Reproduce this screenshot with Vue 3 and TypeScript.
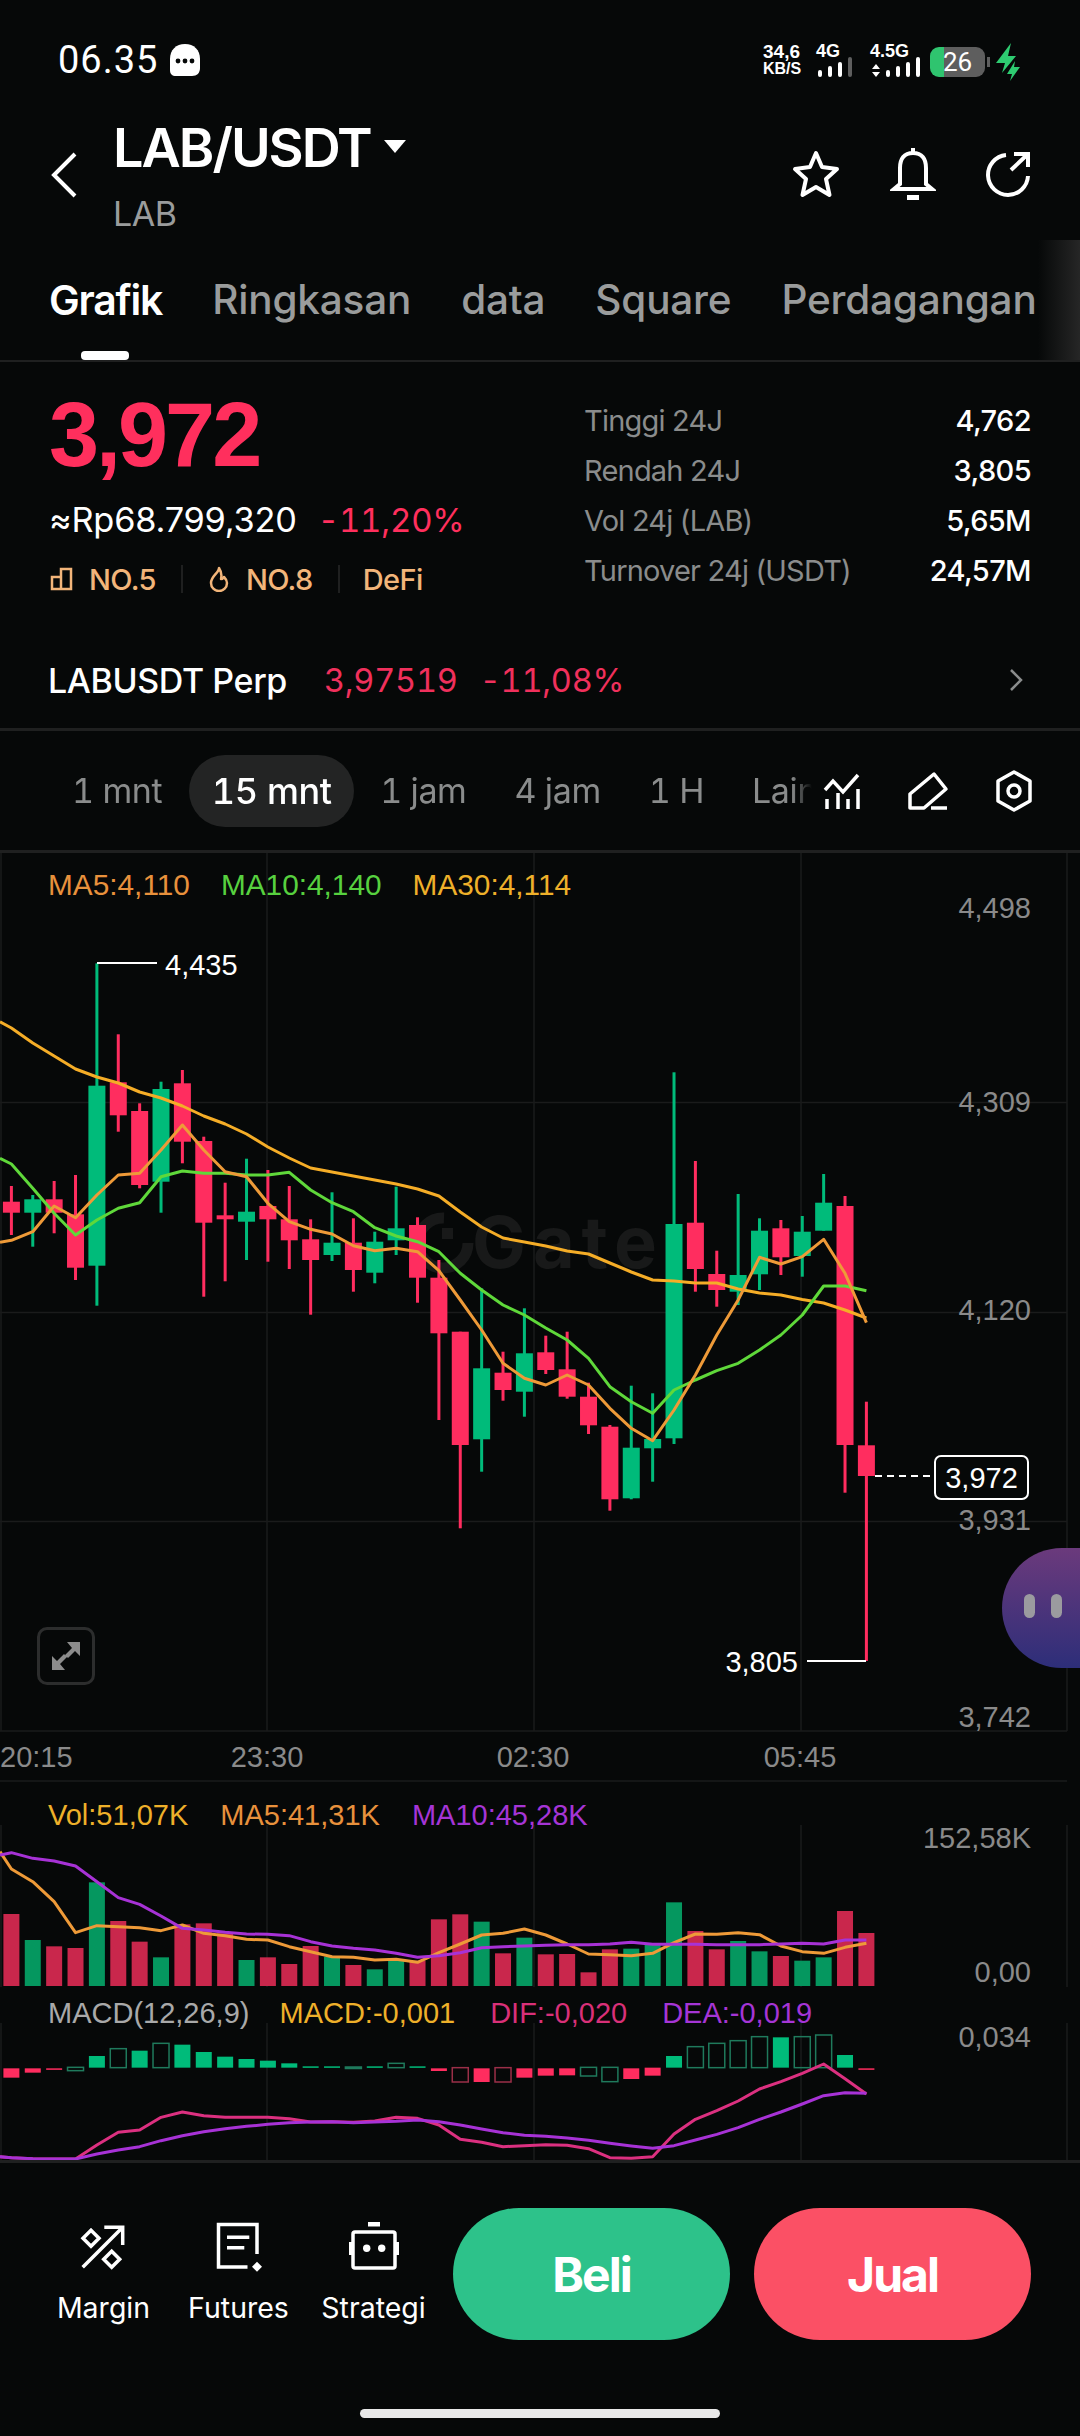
<template>
  <div class="app">
    <!-- status bar -->
    <div class="status">
      <span class="clock">06.35</span>
      <svg class="bubble" width="30" height="32" viewBox="0 0 30 32">
        <path d="M15 0C24 0 30 6 30 15v9c0 5-3 8-8 8H6C2 32 0 30 0 26V15C0 6 6 0 15 0Z" fill="#fff" />
        <circle cx="8" cy="17" r="2.4" fill="#060808" />
        <circle cx="15" cy="17" r="2.4" fill="#060808" />
        <circle cx="22" cy="17" r="2.4" fill="#060808" />
      </svg>
      <div class="status-right">
        <div class="speed"><span class="speed-num">34,6</span><span>KB/S</span></div>
        <div class="net net-a">
          <span class="net-label">4G</span>
          <div class="bars">
            <i v-for="(h, i) in signalA" :key="i" :class="{ off: i === 3 }" :style="{ height: h + 'px' }"></i>
          </div>
        </div>
        <div class="net net-b">
          <span class="net-label">4.5G</span>
          <div class="bars">
            <svg class="updown" width="8" height="13" viewBox="0 0 8 13">
              <path d="M4 0l4 5H0ZM4 13l4-5H0Z" fill="#fff" />
            </svg>
            <i v-for="(h, i) in signalB" :key="i" :style="{ height: h + 'px' }"></i>
          </div>
        </div>
        <div class="battery"><span>26</span></div>
        <i class="battery-nub"></i>
        <svg class="bolt" width="24" height="38" viewBox="0 0 24 38">
          <path d="M15 0 0 20h9L6 30 20 13h-8l3-13ZM19 18 11 31h5l-2 7 10-14h-6l1-6Z" fill="#2ecc71" />
        </svg>
      </div>
    </div>

    <!-- title bar -->
    <div class="head">
      <svg class="back" width="26" height="46" viewBox="0 0 26 46">
        <path d="M24 2 3 23l21 21" fill="none" stroke="#fff" stroke-width="4" />
      </svg>
      <div class="head-title">
        <div class="pair">LAB/USDT<i class="caret"></i></div>
        <div class="base">LAB</div>
      </div>
      <div class="head-icons">
        <svg width="50" height="50" viewBox="0 0 50 50">
          <path d="M25 4l6 14 15 2-11 10 3.500 16L25 38l-13.500 8L15 30 4 20l15-2Z" fill="none" stroke="#fff" stroke-width="4" stroke-linejoin="round" />
        </svg>
        <svg width="46" height="52" viewBox="0 0 46 52">
          <path d="M23 5C14 5 10 11 10 20v16l-6 5h38l-6-5V20C36 11 32 5 23 5ZM23 0v5" fill="none" stroke="#fff" stroke-width="4" />
          <rect x="17" y="47" width="12" height="5" fill="#fff" />
        </svg>
        <svg width="46" height="46" viewBox="0 0 46 46">
          <path d="M21 4a20 20 0 1 0 22 21" fill="none" stroke="#fff" stroke-width="4" />
          <path d="M26 19 43 3M29 3h14v13" fill="none" stroke="#fff" stroke-width="4" />
        </svg>
      </div>
    </div>

    <!-- tabs -->
    <div class="tabs">
      <div v-for="t in tabs" :key="t" class="tab" :class="{ active: t === 'Grafik' }">{{ t }}</div>
      <div class="tabs-fade"></div>
    </div>

    <!-- price summary -->
    <div class="summary">
      <div class="summary-left">
        <div class="last">3,972</div>
        <div class="fiat"><span>≈Rp68.799,320</span><span class="neg">-11,20%</span></div>
        <div class="tags">
          <svg width="23" height="24" viewBox="0 0 23 24">
            <path d="M2 10h9v12H2ZM11 2h10v20H11Z" fill="none" stroke="#f2b57a" stroke-width="2.500" />
          </svg>
          <span class="tag-a">NO.5</span>
          <i class="tag-sep"></i>
          <svg width="22" height="26" viewBox="0 0 22 26">
            <path d="M11 2c0 5-8 8-8 15a8 8 0 0 0 16 0c0-3-2-5-3-6-1 2-2 2-3 2 1-4 0-8-2-11Z" fill="none" stroke="#f2b57a" stroke-width="2.500" stroke-linejoin="round" />
          </svg>
          <span class="tag-a">NO.8</span>
          <i class="tag-sep"></i>
          <span class="tag-b">DeFi</span>
        </div>
      </div>
      <div class="summary-right">
        <div v-for="r in stats" :key="r.label" class="stat">
          <span>{{ r.label }}</span><b>{{ r.value }}</b>
        </div>
      </div>
    </div>

    <!-- perp link -->
    <div class="perp">
      <span class="perp-name">LABUSDT Perp</span>
      <span class="perp-num">3,97519</span>
      <span class="perp-num perp-chg">-11,08%</span>
      <svg class="perp-go" width="14" height="24" viewBox="0 0 14 24">
        <path d="M2 2l10 10L2 22" fill="none" stroke="#8a8c8c" stroke-width="2.500" />
      </svg>
    </div>

    <!-- timeframes -->
    <div class="frames">
      <div class="frame-list">
        <div v-for="f in frames" :key="f" class="frame" :class="{ on: f === '15 mnt' }">{{ f }}</div>
      </div>
      <div class="frame-tools">
        <svg width="38" height="38" viewBox="0 0 38 38">
          <path d="M2 18 10 9l10 11L35 3" fill="none" stroke="#fff" stroke-width="3.500" />
          <path d="M4 27v10M15 21v16M25 27v10M35 17v20" fill="none" stroke="#fff" stroke-width="3.500" />
        </svg>
        <svg width="42" height="40" viewBox="0 0 42 40">
          <path d="M27 3 39 18 17 37H3V23Z" fill="none" stroke="#fff" stroke-width="3.500" stroke-linejoin="round" />
          <path d="M24 37h16" fill="none" stroke="#fff" stroke-width="3.500" />
        </svg>
        <svg width="38" height="42" viewBox="0 0 38 42">
          <path d="M19 2 35 11v20L19 40 3 31V11Z" fill="none" stroke="#fff" stroke-width="3.500" stroke-linejoin="round" />
          <circle cx="19" cy="21" r="6" fill="none" stroke="#fff" stroke-width="3.500" />
        </svg>
      </div>
    </div>

    <!-- chart, drawn in page coordinates -->
    <div class="chart">
      <svg class="plot" width="1080" height="1313" viewBox="0 851 1080 1313">
        <g class="grid">
          <line v-for="y in gridH" :key="y" x1="0" x2="1067" :y1="y" :y2="y" />
          <template v-for="x in gridV" :key="x">
            <line :x1="x" :x2="x" y1="851" y2="1731" />
            <line :x1="x" :x2="x" y1="1825" y2="1987" />
            <line :x1="x" :x2="x" y1="2023" y2="2160" />
          </template>
        </g>

        <!-- watermark -->
        <g class="mark">
          <path d="M444 1218a25 25 0 1 0 24 25" fill="none" stroke="#181919" stroke-width="11" />
          <rect x="442" y="1228" width="11" height="11" fill="#181919" />
          <text x="472" y="1268" textLength="185">Gate</text>
        </g>

        <g v-for="(c, i) in candles" :key="i" :fill="c[0] === 'r' ? red : green">
          <rect :x="cx(i) - 1.500" :y="c[1]" width="3" :height="c[4] - c[1]" />
          <rect :x="cx(i) - 8.500" :y="c[2]" width="17" :height="c[3] - c[2]" />
        </g>
        <polyline class="ln" stroke="#f5ad27" :points="path(ma30, 1021.7)" />
        <polyline class="ln" stroke="#5fd83a" :points="path(ma10, 1158.3)" />
        <polyline class="ln" stroke="#ee9a38" :points="path(ma5, 1242.3)" />

        <path d="M97 963h60" class="tick" />
        <text class="tag" x="165" y="975">4,435</text>
        <path d="M807 1661h59" class="tick" />
        <text class="tag" x="798" y="1672" text-anchor="end">3,805</text>
        <path d="M875 1476h55" class="tick" stroke-dasharray="7 5" />
        <rect x="935" y="1456" width="93" height="43" rx="6" fill="#060808" stroke="#fff" stroke-width="2" />
        <text class="tag" x="981.500" y="1488" text-anchor="middle">3,972</text>

        <g class="axis">
          <text v-for="a in axis" :key="a.t" x="1031" :y="a.y" text-anchor="end">{{ a.t }}</text>
          <text v-for="a in times" :key="a.t" :x="a.x" y="1767" :text-anchor="a.x ? 'middle' : 'start'">{{ a.t }}</text>
        </g>

        <!-- volume -->
        <rect
          v-for="(v, i) in volume"
          :key="'v' + i"
          :x="cx(i) - 8"
          :y="volY(v)"
          width="16"
          :height="volY(588) - volY(v)"
          :fill="volUp.includes(i) ? '#05975f' : '#c9274c'"
        />
        <polyline class="ln" stroke="#ee9a38" :points="subPath(volMa5, 185)" />
        <polyline class="ln" stroke="#a732d6" :points="subPath(volMa10, 195)" />

        <!-- macd -->
        <rect
          v-for="(m, i) in macd"
          :key="'m' + i"
          :x="cx(i) - 8"
          :y="volY(m[0])"
          width="16"
          :height="Math.max((m[1] - m[0]) / 3, 1.500)"
          :fill="m[2] ? 'none' : m[0] < 833 ? green : red"
          :stroke="m[2] ? (m[0] < 833 ? '#1f7a5c' : '#9b2f48') : 'none'"
          stroke-width="1.500"
        />
        <polyline class="ln" stroke="#dc3080" :points="subPath(dif, 1100)" />
        <polyline class="ln" stroke="#a732d6" :points="subPath(dea, 1100)" />
      </svg>

      <div class="legend legend-ma">
        <span class="c-orange">MA5:4,110</span>
        <span class="c-green">MA10:4,140</span>
        <span class="c-yellow">MA30:4,114</span>
      </div>
      <div class="legend legend-vol">
        <span class="c-yellow">Vol:51,07K</span>
        <span class="c-orange">MA5:41,31K</span>
        <span class="c-purple">MA10:45,28K</span>
      </div>
      <div class="legend legend-macd">
        <span class="c-gray">MACD(12,26,9)</span>
        <span class="c-yellow">MACD:-0,001</span>
        <span class="c-pink">DIF:-0,020</span>
        <span class="c-purple">DEA:-0,019</span>
      </div>

      <div class="expand">
        <svg width="30" height="30" viewBox="0 0 30 30">
          <path d="M29 1v14l-5-5-7 7-3-3 7-7-5-6ZM1 29V15l5 5 7-7 3 3-7 7 5 6Z" fill="#8c8c8c" />
        </svg>
      </div>
      <div class="assistant"><i></i><i></i></div>
    </div>

    <!-- actions -->
    <div class="actions">
      <div class="tool">
        <svg width="50" height="50" viewBox="0 0 50 50">
          <path d="M12 8.300l8 8-8 8-8-8ZM32.700 29.300l8 8-8 8-8-8ZM3.700 45.300 43.700 5.300M25.300 5.300h18.400V23" fill="none" stroke="#fff" stroke-width="3.500" />
        </svg>
        <span>Margin</span>
      </div>
      <div class="tool">
        <svg width="50" height="50" viewBox="0 0 50 50">
          <path d="M43 32V2.500H4.500V45h29M13 15.300h22.300M13 25.700h17.300" fill="none" stroke="#fff" stroke-width="3.500" />
          <path d="M43 39.700l5 5-5 5-5-5Z" fill="#fff" />
        </svg>
        <span>Futures</span>
      </div>
      <div class="tool">
        <svg width="52" height="50" viewBox="0 0 52 50">
          <path d="M20 0h12v4.500H20ZM1 20h3.500v13H1ZM47.500 20H51v13h-3.500Z" fill="#fff" />
          <rect x="5" y="10" width="42" height="36" rx="2" fill="none" stroke="#fff" stroke-width="3.500" />
          <circle cx="18.700" cy="26.300" r="3.700" fill="#fff" />
          <circle cx="33.700" cy="26.300" r="3.700" fill="#fff" />
        </svg>
        <span>Strategi</span>
      </div>
      <div class="trade buy">Beli</div>
      <div class="trade sell">Jual</div>
    </div>
    <div class="home-bar"></div>
  </div>
</template>

<script setup lang="ts">
type Candle = [string, number, number, number, number];

const red = '#ff2d5f';
const green = '#00bb7a';

const signalA = [7, 11, 15, 20];
const signalB = [7, 11, 15, 20];

const tabs = ['Grafik', 'Ringkasan', 'data', 'Square', 'Perdagangan'];
const frames = ['1 mnt', '15 mnt', '1 jam', '4 jam', '1 H', 'Lain'];

const stats = [
  { label: 'Tinggi 24J', value: '4,762' },
  { label: 'Rendah 24J', value: '3,805' },
  { label: 'Vol 24j (LAB)', value: '5,65M' },
  { label: 'Turnover 24j (USDT)', value: '24,57M' },
];

const gridH = [1102.5, 1312.5, 1521.5, 1731, 1781];
const gridV = [1, 267, 534, 801, 1067];

const axis = [
  { t: '4,498', y: 918 },
  { t: '4,309', y: 1112 },
  { t: '4,120', y: 1320 },
  { t: '3,931', y: 1530 },
  { t: '3,742', y: 1727 },
  { t: '152,58K', y: 1848 },
  { t: '0,00', y: 1982 },
  { t: '0,034', y: 2047 },
  { t: '-0,037', y: 2180 },
];
const times = [
  { t: '20:15', x: 0 },
  { t: '23:30', x: 267 },
  { t: '02:30', x: 533 },
  { t: '05:45', x: 800 },
];

// color, wick top, body top, body bottom, wick bottom
const candles: Candle[] = [
  ['r', 1186, 1201.7, 1212.7, 1235],
  ['g', 1195, 1199.3, 1212.7, 1246.7],
  ['r', 1181, 1199.3, 1212.7, 1233.3],
  ['r', 1175, 1214.3, 1267.7, 1280],
  ['g', 963.3, 1085.7, 1265.7, 1305.7],
  ['r', 1034.3, 1082.3, 1115.3, 1131.7],
  ['r', 1103.3, 1111, 1185, 1188.3],
  ['g', 1081.7, 1089, 1181.7, 1212.7],
  ['r', 1070, 1083.3, 1141.7, 1163.3],
  ['r', 1136.7, 1141, 1222.7, 1296.7],
  ['r', 1182.7, 1215.3, 1219.3, 1281.3],
  ['g', 1158.7, 1211.7, 1221.7, 1260],
  ['r', 1170, 1206, 1219.3, 1261.7],
  ['r', 1186, 1219.3, 1240.3, 1269],
  ['r', 1219.3, 1239.3, 1260, 1314.7],
  ['g', 1192.3, 1242.7, 1255, 1261],
  ['r', 1218.3, 1242.7, 1270, 1291.7],
  ['g', 1231.7, 1241.7, 1272.7, 1283.3],
  ['g', 1186.7, 1228.3, 1240.3, 1255],
  ['r', 1217.3, 1225, 1277.7, 1302.7],
  ['r', 1260, 1277.7, 1333.3, 1420],
  ['r', 1331.7, 1331.7, 1445, 1528.3],
  ['g', 1288.3, 1368.3, 1439.3, 1471.7],
  ['r', 1351.7, 1372.7, 1390, 1400.7],
  ['g', 1308.3, 1353.3, 1391.7, 1416.7],
  ['r', 1335.7, 1352.3, 1370, 1374],
  ['r', 1331.7, 1369.3, 1396.7, 1398.7],
  ['r', 1382.7, 1396.7, 1425.3, 1434],
  ['r', 1425, 1426.7, 1499.3, 1510.7],
  ['g', 1385.7, 1447.7, 1498.3, 1499.3],
  ['g', 1393.3, 1439, 1448.3, 1481.7],
  ['g', 1072.3, 1224, 1438.3, 1444],
  ['r', 1161, 1222.7, 1269, 1291.7],
  ['r', 1250.7, 1274, 1290, 1306.7],
  ['g', 1194, 1275, 1291.7, 1305],
  ['g', 1218.3, 1230.7, 1274.3, 1290],
  ['r', 1220, 1228.3, 1257.3, 1275],
  ['g', 1216, 1231.7, 1256, 1276.7],
  ['g', 1174, 1202.7, 1230.7, 1230.7],
  ['r', 1196, 1206, 1445, 1492.7],
  ['r', 1401.7, 1445.3, 1476, 1661],
];

const ma5 = [1240.3, 1231.7, 1206, 1217.7, 1195, 1175, 1173.3, 1150, 1125, 1150, 1171.7, 1176.7, 1203.3, 1221.7, 1229.3, 1234, 1245.7, 1250.7, 1248.3, 1251.7, 1270.7, 1300, 1330, 1363.3, 1378.3, 1385, 1375, 1385, 1408.3, 1428.3, 1440.7, 1410, 1375, 1335, 1300, 1257.3, 1264, 1256.7, 1239.3, 1273.3, 1322.7];
const ma10 = [1164, 1188.3, 1213.3, 1235, 1220, 1208.3, 1202.7, 1176.7, 1171, 1173.3, 1173.3, 1175, 1175, 1172.3, 1190, 1202.7, 1211.7, 1227.7, 1236, 1241.7, 1251.7, 1273.3, 1290, 1305, 1315, 1328, 1340, 1358.3, 1386.7, 1401.7, 1413.3, 1390, 1380, 1370.7, 1363.3, 1350, 1335, 1315, 1286, 1286, 1290.7];
const ma30 = [1028, 1043, 1056, 1069, 1077, 1083, 1092, 1098, 1106, 1116, 1124, 1134, 1147, 1158, 1168, 1172, 1176, 1180, 1184, 1189, 1196, 1212, 1227, 1238, 1242, 1246, 1251, 1254, 1263, 1272, 1280, 1281, 1283, 1283, 1289, 1293, 1295, 1299.5, 1303, 1310, 1318];

// lower panels sampled at 3x from y = 1790
const volume = [372, 450, 469, 474, 277, 393, 455, 502, 403, 400, 430, 510, 502, 522, 468, 500, 525, 538, 510, 512, 388, 373, 395, 490, 443, 493, 492, 547, 478, 476, 460, 337, 423, 478, 453, 484, 498, 512, 502, 363, 429];
const volUp = [1, 4, 7, 11, 15, 17, 18, 22, 24, 29, 30, 31, 34, 35, 37, 38];
const volMa5 = [237, 275, 335, 428, 407, 410, 413, 422, 405, 430, 437, 448, 450, 470, 485, 500, 502, 510, 508, 517, 488, 462, 435, 430, 417, 435, 462, 492, 494, 497, 490, 458, 432, 433, 428, 434, 468, 485, 490, 472, 460];
const volMa10 = [188, 205, 213, 228, 275, 323, 343, 378, 415, 420, 427, 432, 433, 437, 455, 468, 475, 480, 490, 502, 497, 488, 473, 470, 468, 466, 464, 464, 462, 457, 463, 463, 463, 464, 464, 464, 462, 460, 462, 450, 450];
const dif = [1103, 1106, 1107, 1107, 1065, 1027, 1020, 982, 966, 977, 982, 982, 982, 986, 996, 995, 997, 993, 982, 985, 1005, 1048, 1057, 1070, 1067, 1064, 1066, 1076, 1103, 1105, 1100, 1032, 988, 962, 933, 897, 875, 850, 822, 866, 912];
const dea = [1103, 1106, 1107, 1107, 1092, 1080, 1070, 1052, 1037, 1025, 1016, 1009, 1003, 998, 996, 995, 998, 996, 994, 990, 995, 1005, 1017, 1028, 1036, 1039, 1044, 1051, 1060, 1068, 1075, 1067, 1050, 1033, 1013, 988, 966, 942, 917, 908, 910];

// top, bottom, hollow
const macd: [number, number, boolean][] = [
  [835, 863, false], [835, 848, false], [835, 836, false], [832, 842, true],
  [798, 833, false], [776, 833, true], [782, 833, false], [760, 833, true],
  [764, 833, false], [786, 833, false], [800, 833, false], [807, 833, false],
  [812, 833, false], [820, 833, false], [829, 832, false], [829, 832, false],
  [831, 832, true], [829, 832, false], [820, 833, true], [829, 832, false],
  [835, 843, false], [833, 876, true], [835, 876, false], [833, 876, true],
  [835, 863, false], [835, 857, false], [835, 856, false], [832, 858, true],
  [832, 875, true], [835, 867, false], [833, 857, false], [798, 833, false],
  [770, 833, true], [760, 833, true], [752, 833, true], [740, 833, true],
  [742, 833, false], [740, 833, true], [735, 833, true], [795, 833, false],
  [835, 836, false],
];

const cx = (i: number) => 11.4 + i * 21.375;
const volY = (z: number) => 1790 + z / 3;

const path = (ys: number[], lead: number) =>
  `0,${lead} ` + ys.map((y, i) => `${cx(i)},${y}`).join(' ');
const subPath = (zs: number[], lead: number) =>
  `0,${volY(lead)} ` + zs.map((z, i) => `${cx(i)},${volY(z)}`).join(' ');
</script>

<style>
html,
body {
  margin: 0;
  background: #060808;
}
</style>

<style scoped>
.app {
  width: 1080px;
  height: 2436px;
  overflow: hidden;
  background: #060808;
  color: #fff;
  font-family: Inter, 'Liberation Sans', sans-serif;
  display: flex;
  flex-direction: column;
}

/* status bar */
.status {
  height: 120px;
  flex: none;
  display: flex;
  align-items: center;
  padding: 0 60px 0 58px;
}
.clock {
  font-family: Roboto, sans-serif;
  font-size: 38px;
  letter-spacing: 1px;
}
.bubble {
  margin-left: 12px;
}
.status-right {
  margin-left: auto;
  display: flex;
  align-items: flex-end;
  height: 34px;
}
.speed {
  display: flex;
  flex-direction: column;
  font-family: 'Liberation Sans', sans-serif;
  font-weight: 700;
  font-size: 16px;
  line-height: 17px;
  width: 53px;
}
.speed-num {
  font-size: 19px;
}
.net {
  position: relative;
  height: 34px;
}
.net-a {
  width: 54px;
}
.net-b {
  width: 60px;
}
.net-label {
  position: absolute;
  left: 0;
  top: -1px;
  font-family: 'Liberation Sans', sans-serif;
  font-weight: 700;
  font-size: 18px;
  line-height: 19px;
}
.bars {
  position: absolute;
  bottom: 0;
  left: 2px;
  display: flex;
  align-items: flex-end;
  gap: 6px;
}
.bars i {
  width: 4px;
  border-radius: 2px;
  background: #fff;
}
.bars i.off {
  background: #5e5e5e;
}
.battery {
  width: 55px;
  height: 30px;
  border-radius: 9px;
  background: linear-gradient(90deg, #2fc46f 14px, #5e5e5e 14px);
  display: flex;
  align-items: center;
  padding-left: 13px;
  box-sizing: border-box;
  font-size: 26px;
  font-family: Roboto, sans-serif;
}
.battery-nub {
  width: 3px;
  height: 10px;
  margin: 0 0 10px 2px;
  background: #5e5e5e;
}
.bolt {
  margin: 0 0 -4px 6px;
}

/* title bar */
.head {
  height: 120px;
  flex: none;
  display: flex;
  padding: 0 49px 0 51px;
}
.back {
  margin: 32px 36px 0 0;
}
.pair {
  font-size: 54px;
  line-height: 56px;
  font-weight: 600;
  letter-spacing: -2px;
  display: flex;
  align-items: center;
}
.caret {
  width: 0;
  height: 0;
  margin: 0 0 4px 13px;
  border-left: 11px solid transparent;
  border-right: 11px solid transparent;
  border-top: 13px solid #fff;
}
.base {
  margin-top: 18px;
  font-size: 34px;
  line-height: 40px;
  color: #9a9c9c;
  letter-spacing: -0.5px;
}
.head-icons {
  margin-left: auto;
  display: flex;
  align-items: center;
  gap: 49px;
  padding: 0 0 12px;
}

/* tabs */
.tabs {
  position: relative;
  flex: none;
  display: flex;
  gap: 50px;
  padding: 40px 0 0 49px;
  box-sizing: border-box;
  border-bottom: 2px solid #1f2020;
  height: 122px;
  font-size: 40.5px;
  line-height: 40px;
  font-weight: 500;
  color: #9a9c9c;
}
.tab {
  position: relative;
  white-space: nowrap;
  letter-spacing: -0.2px;
}
.tab.active {
  color: #fff;
  font-weight: 600;
  font-size: 41px;
  letter-spacing: -1.2px;
}
.tab.active::after {
  content: '';
  position: absolute;
  left: 32px;
  bottom: 0;
  width: 48px;
  height: 9px;
  border-radius: 4px;
  background: #fff;
}
.tabs-fade {
  position: absolute;
  right: 0;
  top: 0;
  bottom: 0;
  width: 42px;
  background: linear-gradient(90deg, rgba(38, 38, 38, 0), #262626);
}

/* summary */
.summary {
  flex: none;
  height: 278px;
  display: flex;
  justify-content: space-between;
  padding: 0 49px 0 49px;
  box-sizing: border-box;
}
.last {
  margin-top: 29px;
  font-family: 'Liberation Sans', sans-serif;
  font-weight: 700;
  font-size: 90px;
  line-height: 88px;
  letter-spacing: -3px;
  color: #ff2f5d;
}
.fiat {
  margin-top: 21px;
  display: flex;
  align-items: baseline;
  gap: 21px;
  font-size: 34.3px;
  line-height: 40px;
  letter-spacing: -0.2px;
}
.neg {
  color: #ff2f5d;
  font-size: 33px;
  font-feature-settings: 'tnum';
}
.tags {
  margin-top: 19px;
  height: 40px;
  display: flex;
  align-items: center;
  padding-left: 1px;
  font-size: 29px;
  font-weight: 500;
  color: #f2b57a;
  letter-spacing: -0.6px;
}
.tag-a {
  margin-left: 16px;
}
.tag-b {
  margin-left: -2px;
}
.tag-sep {
  width: 2px;
  height: 28px;
  margin: 0 25px;
  background: #1f2020;
}
.summary-right {
  width: 447px;
  padding-top: 33px;
}
.stat {
  height: 50px;
  display: flex;
  justify-content: space-between;
  align-items: center;
  font-size: 29px;
  letter-spacing: -0.8px;
  color: #8a8c8c;
}
.stat b {
  font-weight: 500;
  color: #fff;
  letter-spacing: -0.6px;
}

/* perp */
.perp {
  flex: none;
  height: 88px;
  display: flex;
  align-items: flex-start;
  border-bottom: 3px solid #1f2020;
  padding-left: 48px;
  padding-right: 57px;
  font-size: 34px;
  line-height: 82px;
}
.perp-name {
  font-weight: 500;
  letter-spacing: -0.4px;
}
.perp-num {
  margin-left: 37px;
  color: #f0305c;
  font-size: 32.5px;
  font-feature-settings: 'tnum';
  letter-spacing: -0.2px;
}
.perp-chg {
  margin-left: 22px;
}
.perp-go {
  margin: 28px 0 0 auto;
}

/* timeframes */
.frames {
  flex: none;
  height: 119px;
  display: flex;
  align-items: center;
  padding-right: 47px;
  padding-left: 48px;
  box-sizing: border-box;
}
.frame-list {
  width: 764px;
  flex: none;
  height: 72px;
  overflow: hidden;
  display: flex;
  color: #8a8c8c;
  font-size: 34px;
  font-feature-settings: 'tnum';
  letter-spacing: -0.4px;
  -webkit-mask-image: linear-gradient(90deg, #000 calc(100% - 20px), transparent);
  mask-image: linear-gradient(90deg, #000 calc(100% - 20px), transparent);
}
.frame {
  padding: 0 24px;
  line-height: 72px;
  white-space: nowrap;
  flex: none;
}
.frame.on {
  width: 165px;
  box-sizing: border-box;
  text-align: center;
  padding: 0;
  background: #232424;
  color: #fff;
  border-radius: 36px;
  font-size: 36px;
  font-weight: 500;
  margin: 0 2px 0 3px;
}
.frame-tools {
  margin-left: auto;
  display: flex;
  align-items: center;
  gap: 46px;
}

/* chart */
.chart {
  position: relative;
  flex: none;
  height: 1313px;
  border-top: 3px solid #1f2020;
  box-sizing: border-box;
  border-bottom: 3px solid #1f2020;
  overflow: hidden;
  font-family: 'Liberation Sans', sans-serif;
}
.plot {
  display: block;
  margin-top: -2px;
}
.grid line {
  stroke: #1a1b1b;
  stroke-width: 1.5;
}
.mark text {
  font-family: Inter, sans-serif;
  font-weight: 700;
  font-size: 72px;
  fill: #181919;
}
.ln {
  fill: none;
  stroke-width: 3;
  stroke-linejoin: round;
}
.tick {
  fill: none;
  stroke: #fff;
  stroke-width: 2;
}
.tag {
  font-family: 'Liberation Sans', sans-serif;
  font-size: 29px;
  fill: #fff;
}
.axis text {
  font-family: 'Liberation Sans', sans-serif;
  font-size: 29px;
  fill: #8a8a8a;
}
.legend {
  position: absolute;
  left: 48px;
  display: flex;
  gap: 32px;
  font-size: 29px;
  line-height: 34px;
}
.legend-ma {
  top: 15px;
  font-size: 29.8px;
  gap: 31px;
}
.legend-vol {
  top: 945px;
}
.legend-macd {
  top: 1143px;
  gap: 35px;
}
.legend-macd .c-gray {
  margin-right: -5px;
}
.c-orange {
  color: #e8913c;
}
.c-green {
  color: #57d13f;
}
.c-yellow {
  color: #eeb02a;
}
.c-purple {
  color: #a535d6;
}
.c-pink {
  color: #d93078;
}
.c-gray {
  color: #a9a9a9;
}
.expand {
  position: absolute;
  left: 37px;
  top: 774px;
  width: 58px;
  height: 58px;
  box-sizing: border-box;
  border: 3px solid #2c2d2d;
  border-radius: 10px;
  display: flex;
  align-items: center;
  justify-content: center;
}
.assistant {
  position: absolute;
  right: 0;
  top: 695px;
  width: 78px;
  height: 120px;
  box-sizing: border-box;
  padding: 46px 0 0 22px;
  display: flex;
  gap: 16px;
  border-radius: 60px 0 0 60px;
  background: linear-gradient(180deg, #6b3a7c, #2d2e79);
}
.assistant i {
  width: 11px;
  height: 24px;
  border-radius: 6px;
  background: #9b9b9f;
}

/* actions */
.actions {
  flex: none;
  display: flex;
  padding: 45px 49px 0 36px;
}
.tool {
  width: 135px;
  padding-top: 14px;
  display: flex;
  flex-direction: column;
  align-items: center;
  gap: 19px;
  font-size: 28.5px;
  line-height: 34px;
}
.trade {
  height: 132px;
  width: 277px;
  border-radius: 66px;
  display: flex;
  align-items: center;
  justify-content: center;
  font-size: 48px;
  font-weight: 700;
  letter-spacing: -2px;
}
.buy {
  margin-left: 12px;
  background: #2dc28a;
}
.sell {
  margin-left: 24px;
  background: #fb5065;
}
.home-bar {
  flex: none;
  width: 360px;
  height: 9px;
  margin: 69px auto 0;
  border-radius: 5px;
  background: #e8e8e8;
}
</style>
